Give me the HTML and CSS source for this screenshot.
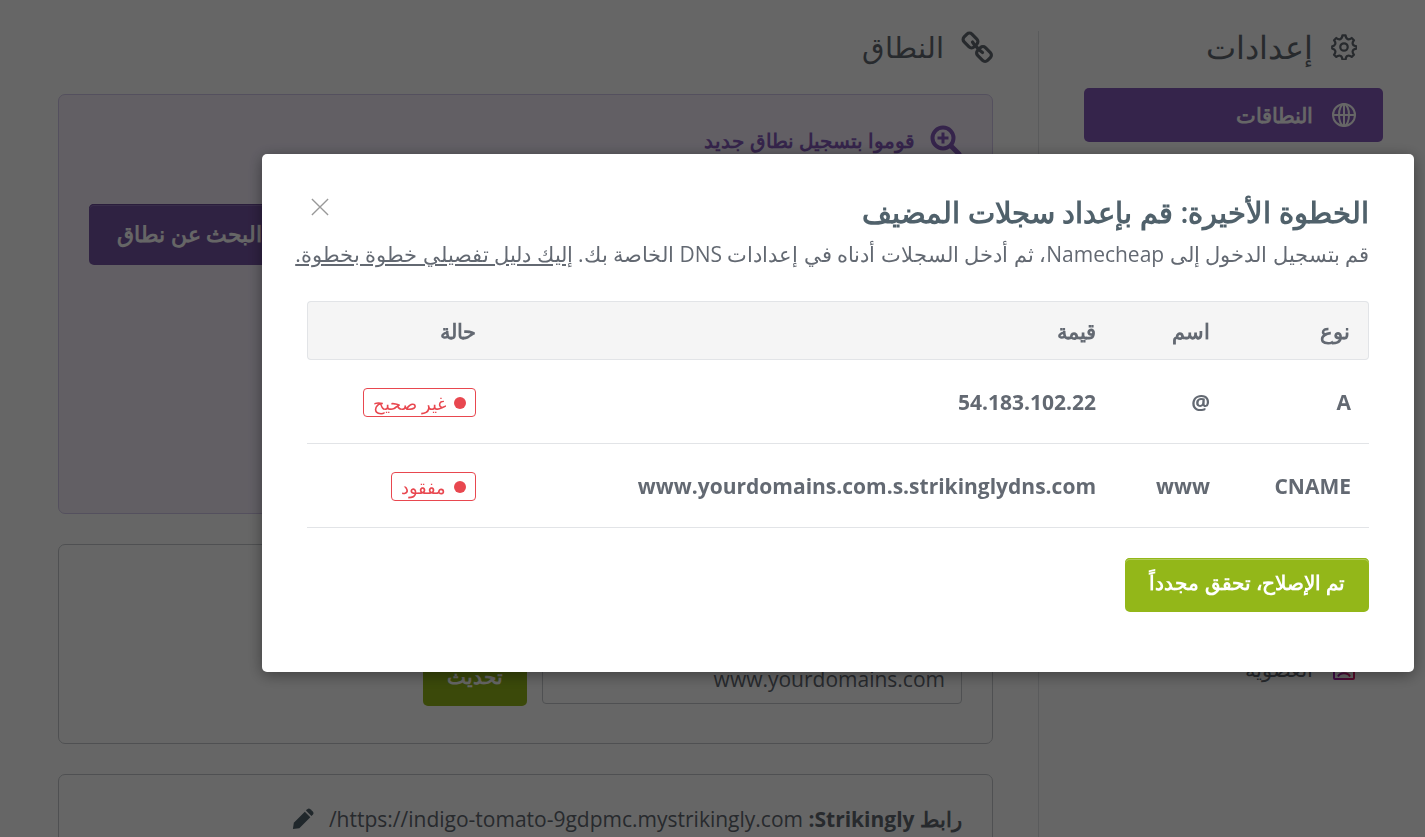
FILE: index.html
```html
<!DOCTYPE html>
<html lang="ar" dir="rtl">
<head>
  <meta charset="UTF-8">
  <meta name="viewport" content="width=device-width, initial-scale=1.0">
  <title>إعدادات النطاق</title>
  <link rel="stylesheet" href="styles.css">
</head>
<body>
  <div class="page">
    <aside class="sidebar">
      <h1 class="sidebar-title">
        <svg class="icon-nav" viewBox="0 0 28 28" fill="none" stroke="currentColor" stroke-width="2.4" stroke-linejoin="round">
          <path d="M12.300 1.500h3.400q.3 3.300 2.300 4 2 .8 4.300-1.200l2.400 2.400q-2 2.300-1.200 4.300.7 2 4 2.300v2.400q-3.300.3-4 2.300-.8 2 1.200 4.300l-2.400 2.400q-2.300-2-4.300-1.200-2 .7-2.300 4h-3.400q-.3-3.300-2.300-4-2-.8-4.300 1.200l-2.400-2.400q2-2.300 1.200-4.300-.7-2-3.200-2.300v-2.400q2.500-.3 3.200-2.300.8-2-1.200-4.300l2.400-2.400q2.300 2 4.300 1.200 2-.7 2.300-4z"/>
          <circle cx="14" cy="14" r="4"/>
        </svg>
        إعدادات
      </h1>
      <nav class="nav">
        <a href="#domains" class="nav-item active">
          <svg class="icon-nav" viewBox="0 0 26 26" fill="none" stroke="currentColor" stroke-width="2">
            <circle cx="13" cy="13" r="11"/>
            <ellipse cx="13" cy="13" rx="5" ry="11"/>
            <path d="M13 2v22M2 13h22"/>
          </svg>
          النطاقات
        </a>
        <a href="#membership" class="nav-item nav-last">
          <svg class="icon-nav" viewBox="0 0 26 26" fill="none" stroke="url(#member)" stroke-width="2">
            <defs>
              <linearGradient id="member"><stop offset="0" stop-color="#9b1fae"/><stop offset="1" stop-color="#e01b68"/></linearGradient>
            </defs>
            <rect x="3" y="3" width="20" height="20" rx="1"/>
            <circle cx="13" cy="10" r="4"/>
            <path d="M7 20.500c2-4.500 10-4.500 12 0"/>
          </svg>
          العضوية
        </a>
      </nav>
    </aside>

    <main class="main">
      <h2 class="main-title">
        <svg class="icon-link" viewBox="0 0 32 32" fill="none" stroke="currentColor" stroke-width="3.2" stroke-linecap="round">
          <rect x="-7" y="-5.500" width="14" height="11" rx="3.500" transform="translate(9.500 9.500) rotate(45)"/>
          <rect x="-7" y="-5.500" width="14" height="11" rx="3.500" transform="translate(23 23) rotate(45)"/>
          <path d="M11.500 11l2 3 5.500 5.500 2.500 2"/>
        </svg>
        النطاق
      </h2>

      <section class="card card-register">
        <h3 class="register-title">
          <svg class="icon-search" viewBox="0 0 32 32" fill="none" stroke="currentColor">
            <circle cx="13" cy="13" r="10.500" stroke-width="4"/>
            <path d="M21 21l8 8" stroke-width="5" stroke-linecap="round"/>
            <path d="M13 7.500v11M7.500 13h11" stroke-width="3"/>
          </svg>
          قوموا بتسجيل نطاق جديد
        </h3>
        <form class="field-row">
          <input type="text" class="input input-search" aria-label="نطاق جديد">
          <button type="button" class="btn btn-purple">البحث عن نطاق</button>
        </form>
      </section>

      <section class="card card-custom">
        <form class="field-row">
          <input type="text" class="input" aria-label="نطاق مخصص" value="www.yourdomains.com">
          <button type="button" class="btn btn-green">تحديث</button>
        </form>
      </section>

      <section class="card card-url">
        <div class="site-url">
          <p><bdi dir="rtl"><strong>رابط Strikingly:</strong></bdi> <bdi dir="rtl">https://indigo-tomato-9gdpmc.mystrikingly.com/</bdi></p>
          <button type="button" class="btn-icon" aria-label="تعديل">
            <svg class="icon-pencil" viewBox="0 0 24 24" fill="currentColor">
              <path d="M1 23l1-7L14 4l6 6L8 22z"/>
              <path d="M15.200 2.800l1.500-1.500q1.700-1.500 3.400 0l2.600 2.600q1.500 1.700 0 3.400l-1.500 1.500z"/>
            </svg>
          </button>
        </div>
      </section>
    </main>
  </div>

  <div class="overlay">
    <div class="modal" role="dialog" aria-labelledby="modal-title">
      <div class="modal-header">
        <h2 class="modal-title" id="modal-title">الخطوة الأخيرة: قم بإعداد سجلات المضيف</h2>
        <button type="button" class="btn-icon btn-close" aria-label="إغلاق">
          <svg class="icon-close" viewBox="0 0 20 20" fill="none" stroke="currentColor" stroke-width="1.500">
            <path d="M1 1l18 18M19 1L1 19"/>
          </svg>
        </button>
      </div>
      <p class="modal-text">قم بتسجيل الدخول إلى Namecheap، ثم أدخل السجلات أدناه في إعدادات DNS الخاصة بك. <a href="#guide">إليك دليل تفصيلي خطوة بخطوة.</a></p>

      <table class="records">
        <thead>
          <tr>
            <th class="col-type">نوع</th>
            <th class="col-name">اسم</th>
            <th>قيمة</th>
            <th class="col-status">حالة</th>
          </tr>
        </thead>
        <tbody>
          <tr>
            <td>A</td>
            <td>@</td>
            <td>54.183.102.22</td>
            <td><span class="status">غير صحيح</span></td>
          </tr>
          <tr>
            <td>CNAME</td>
            <td>www</td>
            <td>www.yourdomains.com.s.strikinglydns.com</td>
            <td><span class="status">مفقود</span></td>
          </tr>
        </tbody>
      </table>

      <button type="button" class="btn btn-green">تم الإصلاح، تحقق مجدداً</button>
    </div>
  </div>
</body>
</html>
```

FILE: styles.css
```css
* {
  margin: 0;
  padding: 0;
  box-sizing: border-box;
}

body {
  height: 100vh;
  overflow: hidden;
  background: #fff;
  color: #636972;
  font-family: "Open Sans", "Noto Sans", sans-serif;
  font-size: 21px;
  line-height: 30px;
}

button,
input {
  font: inherit;
}

/* Page */
.page {
  display: flex;
  height: 100vh;
  overflow: hidden;
  padding: 31px 42px 0 58px;
}

.sidebar {
  flex: 0 0 345px;
  padding-left: 45px;
  border-left: 1px solid #e2e4e7;
}

.sidebar-title,
.main-title {
  display: flex;
  align-items: center;
  font-weight: 400;
  line-height: 32px;
}

.sidebar-title {
  gap: 18px;
  padding-right: 26px;
  margin-bottom: 25px;
  font-size: 32px;
}

.nav-item {
  display: flex;
  align-items: center;
  gap: 18px;
  height: 54px;
  padding: 0 26px;
  border-radius: 5px;
  color: #636972;
  text-decoration: none;
}

.nav-item.active {
  background: #855abb;
  color: #fff;
  font-weight: 600;
}

.nav-last {
  margin-top: 500px;
}

.icon-nav {
  width: 26px;
  height: 26px;
}

.main {
  flex: 1;
  padding-right: 45px;
}

.main-title {
  gap: 17px;
  margin-bottom: 31px;
  font-size: 29px;
}

.icon-link {
  width: 32px;
  height: 32px;
}

.card {
  margin-bottom: 30px;
  padding: 30px;
  border: 1px solid #c6c9cd;
  border-radius: 7px;
}

.card-register {
  min-height: 420px;
  background: #f4eefb;
  border-color: #d3c8ea;
}

.register-title {
  display: flex;
  align-items: center;
  gap: 15px;
  height: 32px;
  margin-bottom: 47px;
  color: #855abb;
  font-size: 20px;
  font-weight: 600;
}

.icon-search {
  width: 32px;
  height: 32px;
}

.field-row {
  display: flex;
  align-items: center;
  gap: 15px;
}

.input {
  width: 420px;
  height: 50px;
  padding: 0 16px;
  border: 1px solid #c6c9cd;
  border-radius: 4px;
  background: #fff;
  color: #636972;
}

.input-search {
  flex: 1;
  height: 60px;
}

.card-custom {
  display: flex;
  flex-direction: column;
  justify-content: flex-end;
  min-height: 200px;
  padding-bottom: 37px;
}

.card-url {
  padding-top: 29px;
}

.site-url {
  display: flex;
  align-items: center;
  gap: 15px;
}

.icon-pencil {
  display: block;
  width: 22px;
  height: 22px;
  color: #50616b;
}

/* Buttons */
.btn {
  height: 54px;
  padding: 0 24px 4px;
  border: 0;
  border-radius: 5px;
  color: #fff;
  font-size: 20px;
  font-weight: 700;
  cursor: pointer;
}

.btn-green {
  background: #93b719;
  box-shadow: inset 0 1px #93b719, inset 0 2px #b0cb57;
}

.btn-purple {
  height: 61px;
  padding: 0 28px 4px;
  background: #7655a5;
  box-shadow: inset 0 1px #6a4997, inset 0 2px #8d70b6;
  font-size: 22px;
}

.btn-icon {
  border: 0;
  background: none;
  cursor: pointer;
}

/* Modal */
.overlay {
  position: fixed;
  inset: 0;
  display: flex;
  align-items: center;
  padding: 0 11px 11px;
  background: rgba(0, 0, 0, 0.6);
}

.modal {
  width: 100%;
  max-width: 1152px;
  padding: 37px 45px 60px;
  border-radius: 5px;
  background: #fff;
  box-shadow: 0 3px 15px rgba(0, 0, 0, 0.4);
}

.modal-header {
  display: flex;
  justify-content: space-between;
}

.modal-title {
  color: #50616b;
  font-size: 29px;
  font-weight: 600;
  line-height: 42px;
}

.btn-close {
  align-self: flex-start;
  margin-top: 3px;
  padding: 4px;
  color: #999;
}

.icon-close {
  display: block;
  width: 18px;
  height: 18px;
}

.modal-text {
  margin: 6px 0 32px;
  white-space: nowrap;
}

.modal-text a {
  color: inherit;
}

.records {
  width: 100%;
  margin-bottom: 30px;
  border-collapse: separate;
  border-spacing: 0;
  text-align: right;
}

.records th {
  height: 59px;
  padding: 0 18px;
  border: solid #e2e4e7;
  border-width: 1px 0;
  background: #f5f5f5;
  font-weight: 600;
}

.records th:first-child {
  border-right-width: 1px;
  border-radius: 0 4px 4px 0;
}

.records th:last-child {
  border-left-width: 1px;
  border-radius: 4px 0 0 4px;
}

.records td {
  height: 84px;
  padding: 0 18px;
  border-bottom: 1px solid #e2e4e7;
  font-weight: 700;
}

.col-type {
  width: 141px;
}

.col-name {
  width: 114px;
}

.col-status {
  width: 187px;
}

.status {
  display: inline-flex;
  align-items: center;
  gap: 8px;
  height: 29px;
  padding: 0 9px;
  border: 1px solid #e8474f;
  border-radius: 4px;
  color: #e8474f;
  font-size: 18px;
  font-weight: 400;
  vertical-align: middle;
}

.status::before {
  content: "";
  width: 12px;
  height: 12px;
  border-radius: 50%;
  background: #e8474f;
}
```
